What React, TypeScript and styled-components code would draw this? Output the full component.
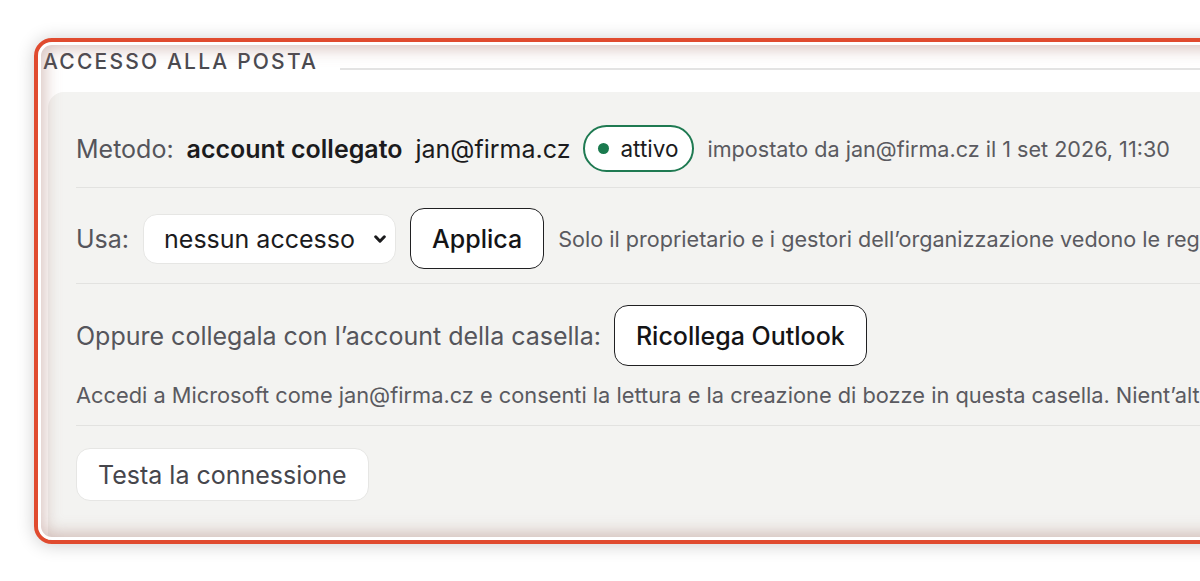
import React from "react";
import styled, { createGlobalStyle } from "styled-components";

const Global = createGlobalStyle`
  html, body { margin: 0; padding: 0; background: #ffffff; }
  body { font-family: Inter, "Noto Sans", sans-serif; overflow: hidden; }
  * { box-sizing: border-box; }
`;

const Page = styled.div`
  width: 1200px;
  height: 581px;
  overflow: hidden;
  padding: 38px 0 0 34px;
`;

const Frame = styled.section`
  position: relative;
  display: flex;
  flex-direction: column;
  width: 1240px;
  height: 506px;
  border: 4px solid #e04b2f;
  border-radius: 18px;
  box-shadow: 0 1px 18px rgba(0, 0, 0, 0.2);
  background: #ffffff;
  padding: 8px 0 0 5px;
  overflow: hidden;
  &::after {
    content: "";
    position: absolute;
    inset: 0;
    border-radius: 14px;
    box-shadow: inset 0 0 0 3px #ffffff, inset 0 0 16px 7px rgba(165, 115, 105, 0.42);
    pointer-events: none;
  }
`;

const Header = styled.div`
  display: flex;
  align-items: flex-end;
`;

const Legend = styled.h2`
  margin: 0;
  font-size: 21px;
  line-height: 24px;
  font-weight: 500;
  letter-spacing: 2.2px;
  color: #4a4a50;
  text-transform: uppercase;
`;

const Rule = styled.div`
  flex: 1;
  height: 2px;
  margin: 0 0 4px 22px;
  background: #e3e3e3;
`;

const Panel = styled.div`
  flex: 1;
  margin: 18px 0 0 5px;
  background: #f3f3f1;
  border-radius: 16px 0 0 0;
  padding: 13px 0 0 28px;
`;

const Row = styled.div<{ $top: number; $bottom: number; $line?: boolean }>`
  padding: ${(p) => p.$top}px 0 ${(p) => p.$bottom}px;
  border-bottom: ${(p) => (p.$line ? "1px solid #e2e2e0" : "none")};
`;

const Line = styled.div<{ $gap: number }>`
  display: flex;
  align-items: center;
  gap: ${(p) => p.$gap}px;
  white-space: nowrap;
`;

const Label = styled.span`
  font-size: 25px;
  line-height: 30px;
  color: #55555b;
`;

const Value = styled.span<{ $bold?: boolean }>`
  font-size: 25px;
  line-height: 30px;
  color: #1b1b1d;
  font-weight: ${(p) => (p.$bold ? 600 : 400)};
`;

const Hint = styled.span`
  font-size: 21.6px;
  line-height: 26px;
  color: #5a5a60;
`;

const Note = styled.p`
  margin: 17px 0 0;
  font-size: 21.8px;
  line-height: 24px;
  color: #5a5a60;
  white-space: nowrap;
`;

const Badge = styled.span`
  display: inline-flex;
  align-items: center;
  gap: 11px;
  height: 47px;
  padding: 0 14px 0 13px;
  border: 2px solid #1f7a52;
  border-radius: 24px;
  background: #ffffff;
  font-size: 22.5px;
  color: #1b1b1d;
`;

const Dot = styled.span`
  width: 11px;
  height: 11px;
  border-radius: 50%;
  background: #1a7a4e;
`;

const SelectWrap = styled.span`
  position: relative;
  display: inline-flex;
`;

const Select = styled.select`
  appearance: none;
  height: 50px;
  width: 253px;
  padding: 0 30px 0 20px;
  font-family: Inter, "Noto Sans", sans-serif;
  font-size: 25px;
  color: #1b1b1d;
  background: #ffffff;
  border: 1px solid #e6e6e4;
  border-radius: 14px;
  outline: none;
`;

const Chevron = styled.svg`
  position: absolute;
  right: 10px;
  top: 21px;
  width: 12px;
  height: 9px;
  pointer-events: none;
`;

const Button = styled.button<{ $quiet?: boolean }>`
  height: ${(p) => (p.$quiet ? 53 : 61)}px;
  padding: 0 21px;
  font-family: Inter, "Noto Sans", sans-serif;
  font-size: 25px;
  font-weight: ${(p) => (p.$quiet ? 400 : 500)};
  color: ${(p) => (p.$quiet ? "#46464c" : "#141416")};
  background: #ffffff;
  border: ${(p) => (p.$quiet ? "1px solid #e6e6e4" : "1.5px solid #202022")};
  border-radius: 14px;
  cursor: pointer;
`;

export default function App() {
  return (
    <>
      <Global />
      <Page>
        <Frame>
          <Header>
            <Legend>Accesso alla posta</Legend>
            <Rule />
          </Header>
          <Panel>
            <Row $top={20} $bottom={15} $line>
              <Line $gap={13}>
                <Label>Metodo:</Label>
                <Value $bold>account collegato</Value>
                <Value>jan@firma.cz</Value>
                <Badge>
                  <Dot />
                  attivo
                </Badge>
                <Hint>impostato da jan@firma.cz il 1 set 2026, 11:30</Hint>
              </Line>
            </Row>
            <Row $top={20} $bottom={14} $line>
              <Line $gap={14}>
                <Label>Usa:</Label>
                <SelectWrap>
                  <Select defaultValue="none">
                    <option value="none">nessun accesso</option>
                    <option value="read">lettura</option>
                  </Select>
                  <Chevron viewBox="0 0 12 9">
                    <path d="M1.7 1.8 L6 6.2 L10.3 1.8" fill="none" stroke="#1b1b1d" strokeWidth="3" strokeLinecap="round" strokeLinejoin="round" />
                  </Chevron>
                </SelectWrap>
                <Button>Applica</Button>
                <Hint>
                  Solo il proprietario e i gestori dell’organizzazione vedono le regole di accesso.
                </Hint>
              </Line>
            </Row>
            <Row $top={21} $bottom={18} $line>
              <Line $gap={13}>
                <Label>Oppure collegala con l’account della casella:</Label>
                <Button>Ricollega Outlook</Button>
              </Line>
              <Note>
                Accedi a Microsoft come jan@firma.cz e consenti la lettura e la creazione di bozze in questa casella. Nient’altro.
              </Note>
            </Row>
            <Row $top={22} $bottom={0}>
              <Button $quiet>Testa la connessione</Button>
            </Row>
          </Panel>
        </Frame>
      </Page>
    </>
  );
}
